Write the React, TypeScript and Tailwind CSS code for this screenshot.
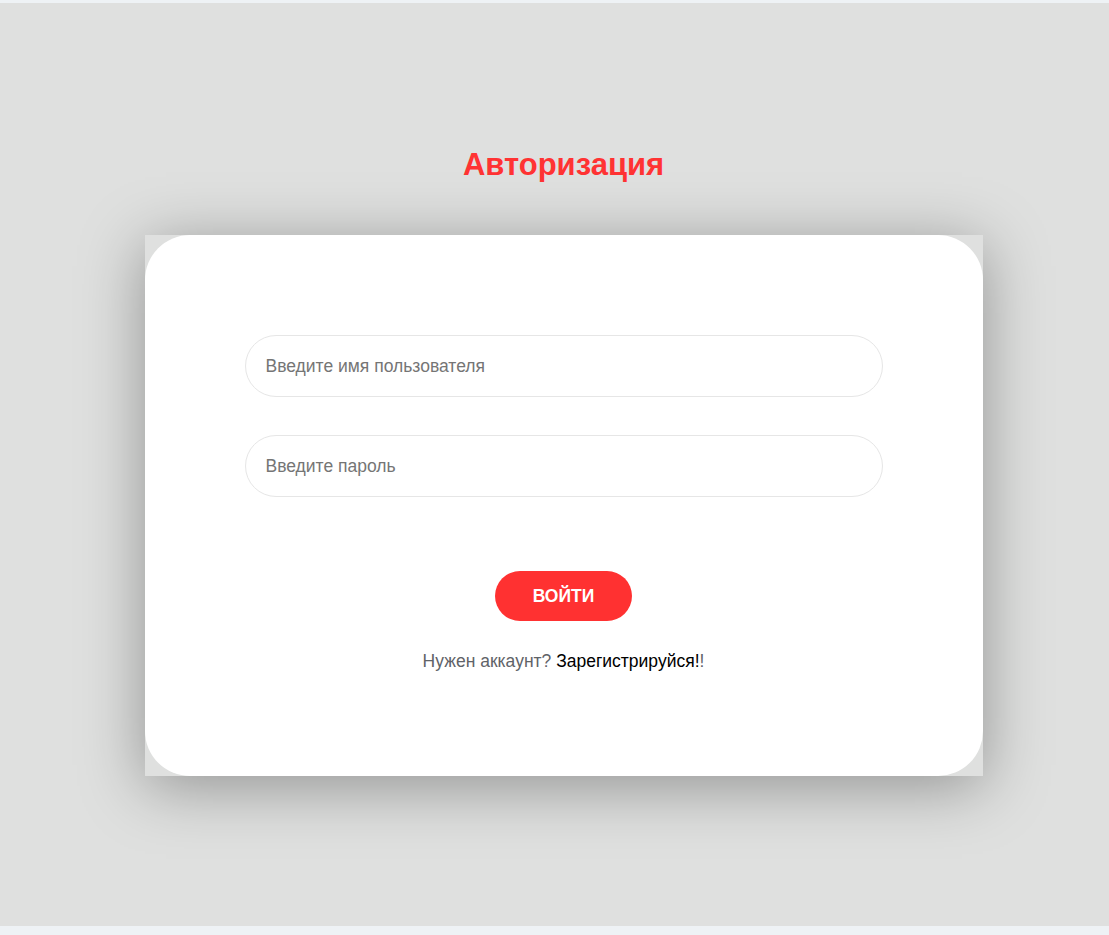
import React from 'react';

export default function App() {
  return (
    <div className="min-h-screen bg-[#eef2f5] pt-[3px] font-['Liberation_Sans',Arial,sans-serif]">
      <div className="h-[923px] bg-[#dfe0df] flex flex-col items-center pt-[145px] pl-[18px]">
        <h1 className="text-[31px] leading-[34px] font-bold text-[#ff3333]">Авторизация</h1>

        <div className="mt-[53px] w-[838px] shadow-[0_10px_60px_rgba(0,0,0,0.35)]">
          <div className="bg-white rounded-[45px] h-[541px] px-[100px] pt-[100px] flex flex-col items-center">
            <input
              type="text"
              placeholder="Введите имя пользователя"
              className="w-full h-[62px] rounded-full border border-[#e6e6e6] px-[20px] text-[17.5px] text-[#333] placeholder:text-[#757575] outline-none"
            />
            <input
              type="password"
              placeholder="Введите пароль"
              className="w-full h-[62px] mt-[38px] rounded-full border border-[#e6e6e6] px-[20px] text-[17.5px] text-[#333] placeholder:text-[#757575] outline-none"
            />
            <button className="mt-[74px] w-[137px] h-[50px] rounded-full bg-[#ff3131] text-white text-[17.5px] font-bold uppercase">
              Войти
            </button>
            <p className="mt-[30px] text-[17.5px] leading-[20px] text-[#5f6368]">
              Нужен аккаунт? <a className="text-black">Зарегистрируйся!</a>!
            </p>
          </div>
        </div>
      </div>
    </div>
  );
}
